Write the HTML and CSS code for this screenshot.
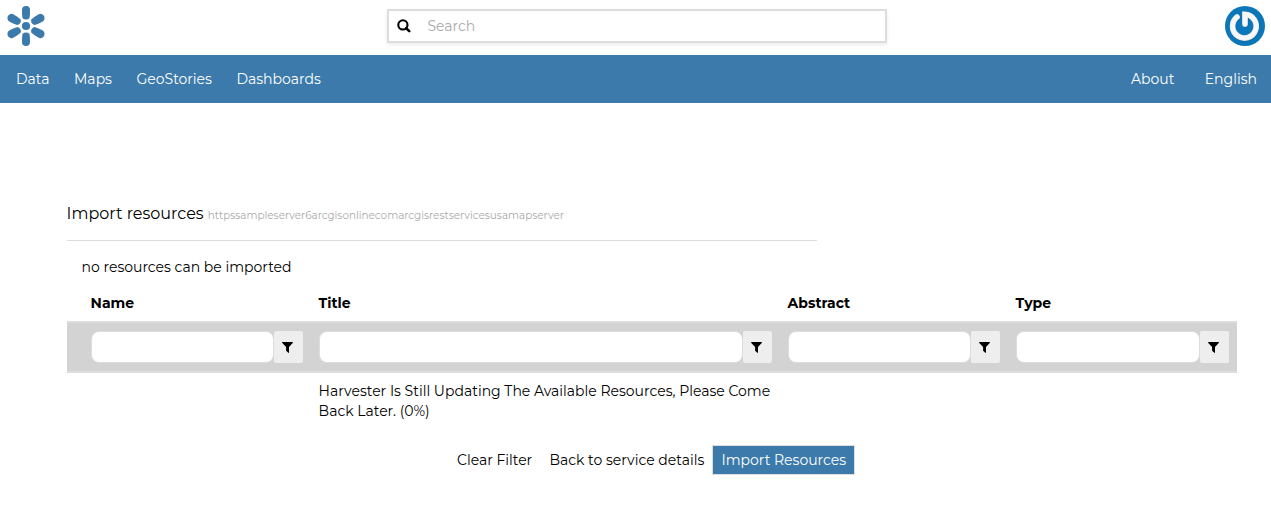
FILE: index.html
```html
<!DOCTYPE html>
<html lang="en">
<head>
<meta charset="utf-8">
<title>Import resources</title>
<link rel="stylesheet" href="styles.css">
</head>
<body>
<svg class="defs" width="0" height="0" aria-hidden="true">
  <symbol id="filter" viewBox="0 0 11 11"><path d="M.4 0h10.2q.6.5.1 1.1L7 4.9v5.6q-.2.6-.7.3L4.1 8.8V4.9L.3 1.1Q-.2.5.4 0z"/></symbol>
</svg>
<header class="topbar">
  <a class="logo" href="#"><svg width="40" height="40" viewBox="-20 -20 40 40" fill="#3b7aab">
    <circle r="4.1"/>
    <path id="petal" d="M-4-16A4 4 0 0 1 4-16Q4.2-11 3.4-7.8Q0-5.4-3.4-7.8Q-4.2-11-4-16z"/>
    <use href="#petal" transform="rotate(180)"/>
    <path id="side" d="M-4.2-16.4A4.2 4.2 0 0 1 4.2-16.4Q4.2-11 3.2-7.8Q0-5-3.2-7.8Q-4.2-11-4.2-16.4z" transform="rotate(61)"/>
    <use href="#side" transform="rotate(180)"/>
    <use href="#side" transform="scale(-1 1)"/>
    <use href="#side" transform="scale(1 -1)"/>
  </svg></a>
  <label class="search">
    <svg width="14" height="14" viewBox="0 0 14 14" fill="none" stroke="#000" stroke-width="2.1"><circle cx="5.9" cy="5.9" r="4.6"/><path d="M9.2 9.2l3 3" stroke-width="2.6" stroke-linecap="round"/></svg>
    <input type="text" placeholder="Search">
  </label>
  <a class="avatar" href="#"><svg width="40" height="40" viewBox="0 0 40 40" fill="none" stroke-linecap="round">
    <circle cx="20" cy="20" r="20" fill="#0b76b8"/>
    <g stroke="#075b90" stroke-width="5.8" opacity=".45" transform="translate(.5 .8)"><path d="M12 11A11.8 11.8 0 1 0 20 8.4V18"/></g>
    <path d="M12 11A11.8 11.8 0 1 0 20 8.4V18" stroke="#d9dddf" stroke-width="5.8"/>
    <path d="M12 11A11.8 11.8 0 1 0 20 8.4V18" stroke="#f8f8f8" stroke-width="4.6"/>
  </svg></a>
</header>
<nav class="nav">
  <div class="links"><a>Data</a><a>Maps</a><a>GeoStories</a><a>Dashboards</a></div>
  <div class="links right"><a>About</a><a>English</a></div>
</nav>
<main class="page">
  <h2 class="title">Import resources <small>httpssampleserver6arcgisonlinecomarcgisrestservicesusamapserver</small></h2>
  <p class="notice">no resources can be imported</p>
  <div class="table">
    <div class="row head"><span></span><b>Name</b><b>Title</b><b>Abstract</b><b>Type</b></div>
    <div class="row filters"><span></span>
      <div class="filter"><input type="text"><button><svg width="11" height="11"><use href="#filter"/></svg></button></div>
      <div class="filter"><input type="text"><button><svg width="11" height="11"><use href="#filter"/></svg></button></div>
      <div class="filter"><input type="text"><button><svg width="11" height="11"><use href="#filter"/></svg></button></div>
      <div class="filter"><input type="text"><button><svg width="11" height="11"><use href="#filter"/></svg></button></div>
    </div>
    <div class="row body"><span></span><span></span><p class="message">Harvester Is Still Updating The Available Resources, Please Come<br>Back Later. (0%)</p></div>
  </div>
  <div class="actions"><a>Clear Filter</a><a>Back to service details</a><a class="import">Import Resources</a></div>
</main>
</body>
</html>
```
FILE: styles.css
```css
* { box-sizing: border-box; }
body { margin: 0; background: #fff; color: #000; font: 14px/20px Montserrat, Inter, sans-serif; }
.defs { position: absolute; }
.topbar { height: 55px; display: flex; justify-content: space-between; align-items: flex-start; padding: 6px 6px 0 5px; }
.logo, .avatar { display: block; width: 40px; height: 40px; }
.logo { padding-left: .5px; }
.logo svg, .avatar svg { display: block; }
.search { display: flex; align-items: center; width: 500px; height: 34px; margin: 3px 0 0 3px; padding-left: 8px; border: 2px solid #ddd; box-shadow: 0 2px 4px rgba(0,0,0,.08); }
.search input { flex: 1; min-width: 0; margin-left: 17px; padding: 0; border: 0; outline: 0; background: none; font: inherit; }
.search input::placeholder { color: #aaa; opacity: 1; }
.nav { height: 48px; background: #3b7aab; color: #fff; display: flex; justify-content: space-between; align-items: center; padding: 0 14px 1px 16px; }
.links { display: flex; gap: 24.5px; }
.links.right { gap: 30.3px; }
.page { width: 1170px; margin: 100px 0 0 66.6px; }
.title { width: 750px; height: 38px; margin: 0; border-bottom: 1px solid #ddd; font-size: 16px; line-height: 21px; font-weight: 400; white-space: nowrap; }
.title small { font-size: 10.4px; color: #aaa; }
.notice { margin: 16px 0 0 15px; }
.row { display: grid; grid-template-columns: 16px 228px 469px 228px 229px; }
.row > :not(:first-child) { padding-left: 8px; }
.head { padding-top: 16px; height: 44px; }
.filters { height: 52px; padding-top: 8px; background: #d3d3d3; border-top: 2px solid #ddd; border-bottom: 2px solid #ddd; }
.filter { display: flex; padding-right: 8px; height: 32px; }
.filter input { flex: 1; min-width: 0; border: 1px solid #ddd; border-radius: 8px; background: #fff; outline: 0; }
.filter button { width: 29px; height: 32px; display: flex; align-items: center; justify-content: center; padding: 0 .6px 0 0; border: 0; border-radius: 2px; background: #eee; }
.body { padding-top: 8px; }
.message { margin: 0; white-space: nowrap; }
.actions { display: flex; margin: 24px 0 0 381.4px; white-space: nowrap; }
.actions a { height: 30px; padding: 4px 8px; border: 1px solid transparent; }
.actions a + a { margin-left: -.8px; }
.actions .import { background: #3b7aab; border-color: #ddd; color: #fff; }
```
